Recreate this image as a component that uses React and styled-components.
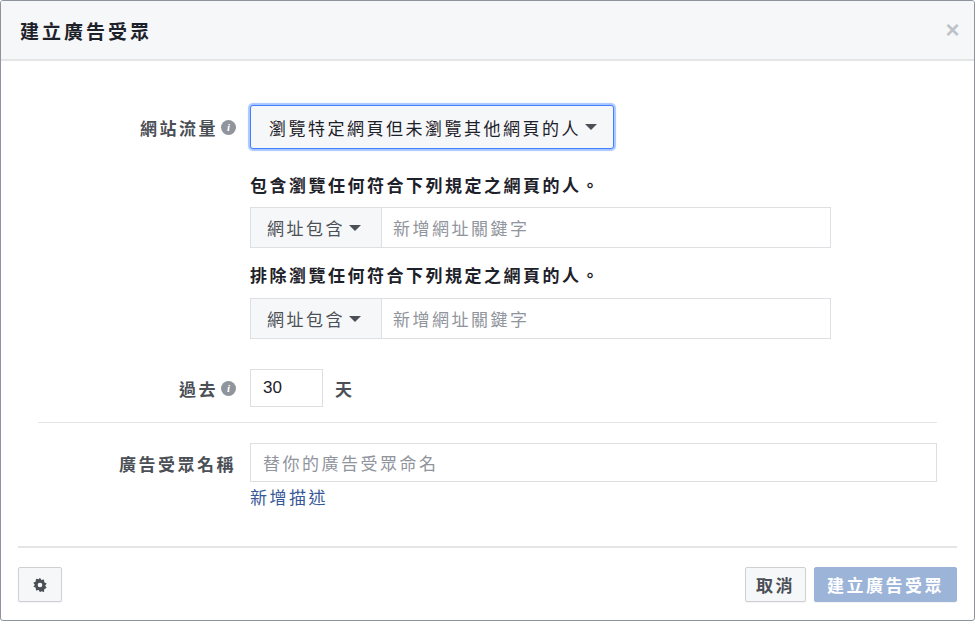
import React from "react";
import styled, { createGlobalStyle } from "styled-components";

const G = createGlobalStyle`
  html,body{margin:0;padding:0;background:#fff;}
  body{font-family:"Liberation Sans","Noto Sans CJK TC",sans-serif;color:#1d2129;letter-spacing:2.5px;}
  #root{width:975px;height:621px;}
`;
const Dialog = styled.div`
  width:975px;height:621px;box-sizing:border-box;border:1px solid #8d949e;border-radius:3px;
  display:flex;flex-direction:column;overflow:hidden;background:#fff;
`;
const Header = styled.div`
  height:60px;flex:none;box-sizing:border-box;background:#f6f7f9;border-bottom:2px solid #e5e5e5;
  display:flex;align-items:center;justify-content:space-between;padding:0 12px 0 19px;
`;
const Title = styled.div`font-size:19px;font-weight:bold;color:#1d2129;letter-spacing:3px;`;
const Close = styled.div`font-size:24px;color:#bec3c9;font-weight:bold;`;
const Body = styled.div`flex:1;padding:44px 37px 0 37px;display:flex;flex-direction:column;`;
const Row = styled.div`display:grid;grid-template-columns:198px 1fr;column-gap:14px;align-items:${p=>p.$align||"center"};`;
const Label = styled.div`
  display:flex;justify-content:flex-end;align-items:center;gap:3px;
  font-size:17px;font-weight:bold;color:#4b4f56;padding-top:${p=>p.$pt||0}px;
`;
const Info = styled.span`
  width:15px;height:15px;border-radius:50%;background:#90949c;color:#fff;font-size:11px;letter-spacing:0;
  font-style:italic;font-weight:bold;font-family:"Liberation Serif",serif;display:inline-flex;align-items:center;justify-content:center;
`;
const Col = styled.div`display:flex;flex-direction:column;align-items:flex-start;`;
const Select = styled.div`
  height:44px;box-sizing:border-box;padding:0 16px 0 18px;display:flex;align-items:center;gap:4px;
  border:1px solid #4080ff;border-radius:3px;box-shadow:0 0 1px 2px #a8c6ff;background:#f6f7f9;
  font-size:17px;color:#1d2129;
`;
const Caret = styled.span`width:0;height:0;border-left:6px solid transparent;border-right:6px solid transparent;border-top:6px solid #4b4f56;`;
const Heading = styled.div`font-size:17px;font-weight:bold;color:#1d2129;margin:${p=>p.$m};`;
const Combo = styled.div`
  width:581px;height:41px;box-sizing:border-box;border:1px solid #dddfe2;display:flex;
`;
const ComboBtn = styled.div`
  width:131px;box-sizing:border-box;border-right:1px solid #dddfe2;background:#f6f7f9;display:flex;align-items:center;
  gap:4px;padding-left:16px;font-size:17px;color:#4b4f56;
`;
const Placeholder = styled.div`padding-left:${p=>p.$pl||11}px;display:flex;align-items:center;font-size:17px;color:#90949c;`;
const DaysWrap = styled.div`display:flex;align-items:center;gap:12px;font-size:17px;font-weight:bold;color:#4b4f56;`;
const Days = styled.div`width:73px;height:38px;box-sizing:border-box;border:1px solid #dddfe2;display:flex;align-items:center;padding-left:12px;font-size:17px;letter-spacing:0;color:#1d2129;font-weight:normal;`;
const Divider = styled.div`height:1px;background:#e5e5e5;margin:${p=>p.$m};`;
const NameInput = styled.div`width:687px;height:39px;box-sizing:border-box;border:1px solid #dddfe2;display:flex;align-items:center;`;
const Link = styled.div`color:#365899;font-size:17px;margin-top:2px;`;
const Footer = styled.div`
  margin:0 17px;border-top:2px solid #e5e5e5;padding:19px 0 18px;display:flex;justify-content:space-between;align-items:center;
`;
const Btn = styled.div`
  height:35px;box-sizing:border-box;border:1px solid #ced0d4;border-radius:2px;background:${p=>p.$primary?"#9cb4d8":"#f6f7f9"};
  border-color:${p=>p.$primary?"#9cb4d8":"#ced0d4"};color:${p=>p.$primary?"#fff":"#4b4f56"};
  font-size:17px;font-weight:bold;display:flex;align-items:center;justify-content:center;padding:0 ${p=>p.$px||10}px;
  box-shadow:0 1px 1px rgba(0,0,0,.05);
`;
const Right = styled.div`display:flex;gap:8px;`;

const Gear = () => (
  <svg width="16" height="16" viewBox="0 0 24 24" fill="#4b4f56">
    <path d="M12 1l2 3.5 4-.9.4 4.1 3.6 2-2.3 3.3 2.3 3.3-3.6 2-.4 4.1-4-.9L12 23l-2-3.5-4 .9-.4-4.1-3.6-2L4.3 12 2 8.7l3.6-2L6 2.6l4 .9z"/>
    <circle cx="12" cy="12" r="3.5" fill="#f6f7f9"/>
  </svg>
);

export default function App(){
  return (<>
    <G/>
    <Dialog>
      <Header><Title>建立廣告受眾</Title><Close>×</Close></Header>
      <Body>
        <Row>
          <Label>網站流量 <Info>i</Info></Label>
          <Col><Select>瀏覽特定網頁但未瀏覽其他網頁的人 <Caret/></Select></Col>
        </Row>
        <Row>
          <div/>
          <Col>
            <Heading $m="23px 0 10px">包含瀏覽任何符合下列規定之網頁的人。</Heading>
            <Combo><ComboBtn>網址包含 <Caret/></ComboBtn><Placeholder>新增網址關鍵字</Placeholder></Combo>
            <Heading $m="14px 0 11px">排除瀏覽任何符合下列規定之網頁的人。</Heading>
            <Combo><ComboBtn>網址包含 <Caret/></ComboBtn><Placeholder>新增網址關鍵字</Placeholder></Combo>
          </Col>
        </Row>
        <Row style={{marginTop:30}}>
          <Label>過去 <Info>i</Info></Label>
          <DaysWrap><Days>30</Days>天</DaysWrap>
        </Row>
        <Divider $m="15px 0 20px"/>
        <Row $align="start">
          <Label $pt={8}>廣告受眾名稱</Label>
          <Col>
            <NameInput><Placeholder $pl={12}>替你的廣告受眾命名</Placeholder></NameInput>
            <Link>新增描述</Link>
          </Col>
        </Row>
      </Body>
      <Footer>
        <Btn $px={13}><Gear/></Btn>
        <Right><Btn>取消</Btn><Btn $primary $px={12}>建立廣告受眾</Btn></Right>
      </Footer>
    </Dialog>
  </>);
}
